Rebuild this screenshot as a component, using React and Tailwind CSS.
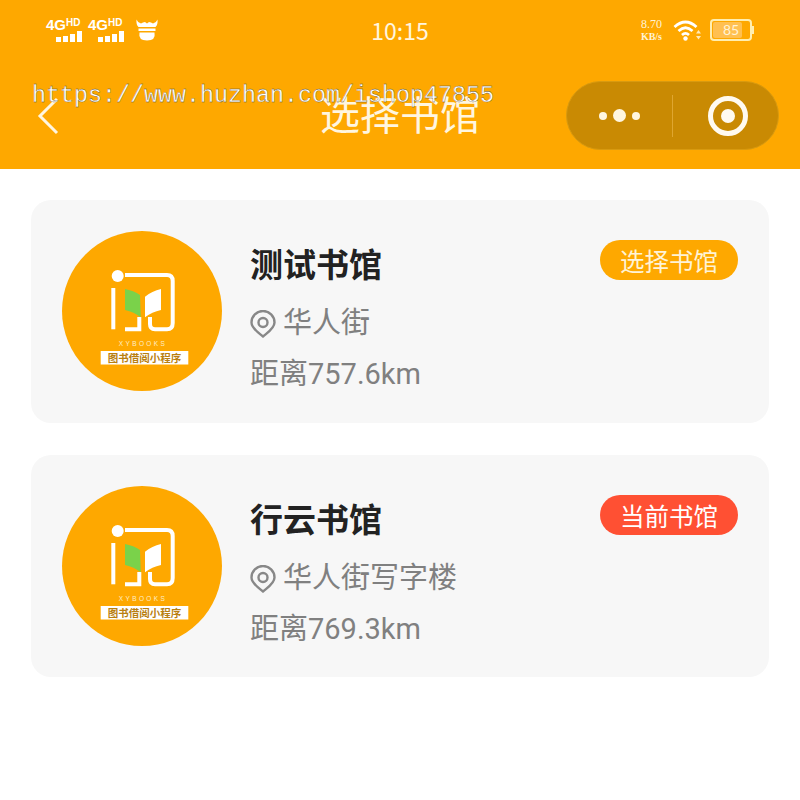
const cjk = "font-['Roboto','Noto_Sans_CJK_SC','Noto_Sans',sans-serif]";

const SignalIcon = () => (
  <div className="flex flex-col w-[36px] h-[24px] text-white font-['Liberation_Sans',sans-serif] font-bold">
    <div className="flex items-start h-[13px] leading-none">
      <span className="text-[15px] leading-[14px]">4G</span>
      <span className="text-[10px] leading-[10px]">HD</span>
    </div>
    <div className="flex items-end justify-end gap-[2px] h-[10px] mt-[1px]">
      <div className="w-[5px] h-[5px] bg-white"></div>
      <div className="w-[5px] h-[6px] bg-white"></div>
      <div className="w-[5px] h-[8px] bg-white"></div>
      <div className="w-[5px] h-[11px] bg-white"></div>
    </div>
  </div>
);

const BullIcon = () => (
  <svg width="22" height="22" viewBox="0 0 22 22" fill="#fff">
    <path d="M0.5 0.5 Q1.5 3.5 5 4.5 Q7 3 9 3 L11 4.5 L13 3 Q15 3 17 4.5 Q20.5 3.5 21.5 0.5 Q22 6 19.5 8 H2.5 Q0 6 0.5 0.5 Z" />
    <path d="M2.5 9.5 H19.5 V12 H2.5 Z" />
    <path d="M3.5 13.5 H18.5 Q20 21.5 11 21.5 Q2 21.5 3.5 13.5 Z" />
  </svg>
);

const WifiIcon = () => (
  <svg width="28" height="22" viewBox="0 0 28 22" fill="none" stroke="#fff">
    <path d="M1.5 8 Q12.5 -2 23.5 8" strokeWidth="2.8" />
    <path d="M5.5 12 Q12.5 5.5 19.5 12" strokeWidth="2.8" />
    <path d="M9 16 Q12.5 12.8 16 16" strokeWidth="2.8" />
    <circle cx="12.5" cy="19.5" r="2.2" fill="#fff" stroke="none" />
    <path d="M25.5 11 L28 14.5 H23 Z M25.5 20.5 L28 17 H23 Z" fill="#ffe9b8" stroke="none" />
  </svg>
);

const BookLogo = () => (
  <svg width="160" height="160" viewBox="0 0 160 160" className="shrink-0">
    <circle cx="80" cy="80" r="80" fill="#fea800" />
    <circle cx="55.7" cy="45" r="6" fill="#fff" />
    <g fill="none" stroke="#fff" strokeWidth="4">
      <path d="M51.3 57 V98.3" />
      <path d="M63 98.3 H77.3 V86" />
      <path d="M63 44 H105 Q110.7 44 110.7 50 V92 Q110.7 98.3 105 98.3 H93 Q88 98.3 88 93 V86" />
    </g>
    <path d="M63 58 Q73 60 78 64 L78.7 86.3 Q72 81 63 79 Z" fill="#7ad24a" />
    <path d="M83 65.7 Q90 60 99 58 V79 Q90 81 83 86.3 Z" fill="#fff" />
    <text x="81" y="115" textAnchor="middle" fontSize="6.5" letterSpacing="2.4" fill="#ffeec8" fontFamily="Liberation Sans">XYBOOKS</text>
    <rect x="38.7" y="120" width="87.6" height="13.5" fill="#fff" />
    <text x="82.5" y="130.8" textAnchor="middle" fontSize="10.5" fontWeight="700" fill="#b97f10" fontFamily="Noto Sans CJK SC">图书借阅小程序</text>
  </svg>
);

const PinIcon = () => (
  <svg width="26" height="28" viewBox="0 0 26 28" fill="none" stroke="#888" strokeWidth="2.4">
    <path d="M13 26.5 C9 23 1.5 18.5 1.5 12.5 A11.5 11.5 0 0 1 24.5 12.5 C24.5 18.5 17 23 13 26.5 Z" strokeLinejoin="round" />
    <circle cx="13" cy="12.5" r="4.5" />
  </svg>
);

const LibraryCard = ({ name, address, distance, action, current }) => (
  <div className="flex items-start h-[222.5px] rounded-[20px] bg-[#f7f7f7] p-[31px]">
    <BookLogo />
    <div className="flex-1 ml-[28px] pt-[12px]">
      <div className="text-[33px] leading-[46px] font-bold text-[#222]">{name}</div>
      <div className="flex items-center mt-[15px] h-[40px] text-[29px] text-[#808080]">
        <PinIcon />
        <span className="ml-[7px]">{address}</span>
      </div>
      <div className="mt-[10px] text-[29px] leading-[40px] text-[#808080]">{distance}</div>
    </div>
    <div
      className={
        current
          ? "mt-[9px] w-[138px] h-[40px] rounded-full bg-[#ff5033] text-white text-center text-[24.5px] leading-[46px]"
          : "mt-[9px] w-[138px] h-[40px] rounded-full bg-[#fea800] text-[#fff3d6] text-center text-[24.5px] leading-[46px]"
      }
    >
      {action}
    </div>
  </div>
);

export default function App() {
  return (
    <div className={`relative w-[800px] h-[800px] overflow-hidden bg-white ${cjk}`}>
      <div className="h-[169px] bg-[#fea800]">
        {/* status bar */}
        <div className="grid grid-cols-3 items-center h-[60px] pl-[46px] pr-[46px]">
          <div className="flex items-center gap-[6px]">
            <SignalIcon />
            <SignalIcon />
            <div className="ml-[6px]">
              <BullIcon />
            </div>
          </div>
          <div className="text-center text-[23px] text-[#fff6e0] font-['Noto_Sans_CJK_SC',sans-serif]">10:15</div>
          <div className="flex items-center justify-end">
            <div className="flex flex-col items-center text-[#fff3d6] font-['Liberation_Serif',serif] leading-none">
              <span className="text-[12px] leading-[13px]">8.70</span>
              <span className="text-[10px] leading-[11px] font-bold">KB/s</span>
            </div>
            <div className="ml-[11px]">
              <WifiIcon />
            </div>
            <div className="flex items-center ml-[9px]">
              <div className="relative w-[42px] h-[22px] rounded-[4px] border-2 border-[#ffeeb0] p-[1px]">
                <div className="w-[29px] h-full rounded-[2px] bg-[#ffc051]"></div>
                <span className="absolute inset-0 text-center text-[14px] leading-[18px] text-[#fff3d6] font-['Lato',sans-serif]">85</span>
              </div>
              <div className="w-[2px] h-[8px] bg-[#ffeeb0]"></div>
            </div>
          </div>
        </div>
        {/* nav bar */}
        <div className="grid grid-cols-[1fr_auto_1fr] items-center pt-[21px]">
          <div className="pl-[36px]">
            <svg width="24" height="38" viewBox="0 0 24 38" fill="none" stroke="#fff6e0" strokeWidth="3">
              <path d="M21 2 L4 19 L21 36" />
            </svg>
          </div>
          <div className="pt-[2px] text-[40px] leading-[65px] text-[#fff6e0]">选择书馆</div>
          <div className="flex justify-end pr-[21px]">
            <div className="flex items-center w-[213px] h-[69px] rounded-full bg-[#c98a03] border border-[#d89a10]">
              <div className="flex items-center justify-center gap-[6px] w-[106px] h-[42px] border-r border-[#dfa630]">
                <div className="w-[8px] h-[8px] rounded-full bg-[#fff6e0]"></div>
                <div className="w-[13px] h-[13px] rounded-full bg-[#fff6e0]"></div>
                <div className="w-[8px] h-[8px] rounded-full bg-[#fff6e0]"></div>
              </div>
              <div className="flex flex-1 items-center justify-center pl-[4px]">
                <div className="flex items-center justify-center w-[40px] h-[40px] rounded-full border-[5px] border-[#fffaf0]">
                  <div className="w-[14px] h-[14px] rounded-full bg-[#fffaf0]"></div>
                </div>
              </div>
            </div>
          </div>
        </div>
      </div>

      {/* library list */}
      <div className="flex flex-col gap-[32px] pt-[31px] px-[31px]">
        <LibraryCard name="测试书馆" address="华人街" distance="距离757.6km" action="选择书馆" />
        <LibraryCard name="行云书馆" address="华人街写字楼" distance="距离769.3km" action="当前书馆" current />
      </div>

      {/* watermark */}
      <div className="absolute left-[32px] top-[80px] text-[23.33px] leading-[32px] whitespace-nowrap text-white font-['Liberation_Mono',monospace] [-webkit-text-stroke:0.3px_#554a30]">
        https://www.huzhan.com/ishop47855
      </div>
    </div>
  );
}
